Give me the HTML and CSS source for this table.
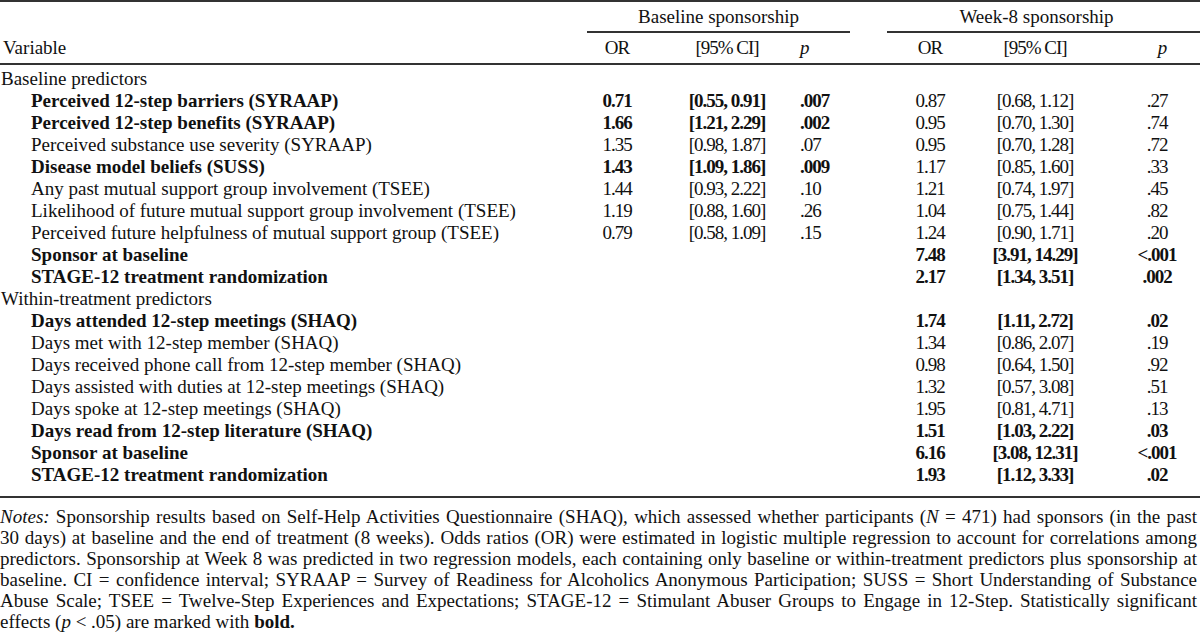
FILE: index.html
```html
<!DOCTYPE html>
<html lang="en">
<head>
<meta charset="utf-8">
<title>Predictors of sponsorship</title>
<link rel="stylesheet" href="styles.css">
</head>
<body>
<div class="page">
<table class="results">
  <colgroup>
    <col class="c-var"><col class="c-or1"><col class="c-ci1"><col class="c-p1"><col class="c-gap"><col class="c-or2"><col class="c-ci2"><col class="c-p2">
  </colgroup>
  <thead>
    <tr class="group-row">
      <th></th>
      <th colspan="3" class="group g1"><div class="group-label">Baseline sponsorship</div></th>
      <th></th>
      <th colspan="3" class="group g2"><div class="group-label">Week-8 sponsorship</div></th>
    </tr>
    <tr class="col-row">
      <th class="var">Variable</th>
      <th class="num ctr">OR</th>
      <th class="num ctr">[95% CI]</th>
      <th class="num left"><i>p</i></th>
      <th></th>
      <th class="num ctr">OR</th>
      <th class="num ctr">[95% CI]</th>
      <th class="num ctr pw ph"><i>p</i></th>
    </tr>
  </thead>
  <tbody>
    <tr class="section first"><td colspan="8">Baseline predictors</td></tr>
    <tr><td class="item b">Perceived 12-step barriers (SYRAAP)</td><td class="num ctr b">0.71</td><td class="num ctr b">[0.55, 0.91]</td><td class="num left b">.007</td><td></td><td class="num ctr">0.87</td><td class="num ctr">[0.68, 1.12]</td><td class="num ctr pw">.27</td></tr>
    <tr><td class="item b">Perceived 12-step benefits (SYRAAP)</td><td class="num ctr b">1.66</td><td class="num ctr b">[1.21, 2.29]</td><td class="num left b">.002</td><td></td><td class="num ctr">0.95</td><td class="num ctr">[0.70, 1.30]</td><td class="num ctr pw">.74</td></tr>
    <tr><td class="item">Perceived substance use severity (SYRAAP)</td><td class="num ctr">1.35</td><td class="num ctr">[0.98, 1.87]</td><td class="num left">.07</td><td></td><td class="num ctr">0.95</td><td class="num ctr">[0.70, 1.28]</td><td class="num ctr pw">.72</td></tr>
    <tr><td class="item b">Disease model beliefs (SUSS)</td><td class="num ctr b">1.43</td><td class="num ctr b">[1.09, 1.86]</td><td class="num left b">.009</td><td></td><td class="num ctr">1.17</td><td class="num ctr">[0.85, 1.60]</td><td class="num ctr pw">.33</td></tr>
    <tr><td class="item">Any past mutual support group involvement (TSEE)</td><td class="num ctr">1.44</td><td class="num ctr">[0.93, 2.22]</td><td class="num left">.10</td><td></td><td class="num ctr">1.21</td><td class="num ctr">[0.74, 1.97]</td><td class="num ctr pw">.45</td></tr>
    <tr><td class="item">Likelihood of future mutual support group involvement (TSEE)</td><td class="num ctr">1.19</td><td class="num ctr">[0.88, 1.60]</td><td class="num left">.26</td><td></td><td class="num ctr">1.04</td><td class="num ctr">[0.75, 1.44]</td><td class="num ctr pw">.82</td></tr>
    <tr><td class="item">Perceived future helpfulness of mutual support group (TSEE)</td><td class="num ctr">0.79</td><td class="num ctr">[0.58, 1.09]</td><td class="num left">.15</td><td></td><td class="num ctr">1.24</td><td class="num ctr">[0.90, 1.71]</td><td class="num ctr pw">.20</td></tr>
    <tr><td class="item b">Sponsor at baseline</td><td></td><td></td><td></td><td></td><td class="num ctr b">7.48</td><td class="num ctr b">[3.91, 14.29]</td><td class="num ctr pw b">&lt;.001</td></tr>
    <tr><td class="item b">STAGE-12 treatment randomization</td><td></td><td></td><td></td><td></td><td class="num ctr b">2.17</td><td class="num ctr b">[1.34, 3.51]</td><td class="num ctr pw b">.002</td></tr>
    <tr class="section"><td colspan="8">Within-treatment predictors</td></tr>
    <tr><td class="item b">Days attended 12-step meetings (SHAQ)</td><td></td><td></td><td></td><td></td><td class="num ctr b">1.74</td><td class="num ctr b">[1.11, 2.72]</td><td class="num ctr pw b">.02</td></tr>
    <tr><td class="item">Days met with 12-step member (SHAQ)</td><td></td><td></td><td></td><td></td><td class="num ctr">1.34</td><td class="num ctr">[0.86, 2.07]</td><td class="num ctr pw">.19</td></tr>
    <tr><td class="item">Days received phone call from 12-step member (SHAQ)</td><td></td><td></td><td></td><td></td><td class="num ctr">0.98</td><td class="num ctr">[0.64, 1.50]</td><td class="num ctr pw">.92</td></tr>
    <tr><td class="item">Days assisted with duties at 12-step meetings (SHAQ)</td><td></td><td></td><td></td><td></td><td class="num ctr">1.32</td><td class="num ctr">[0.57, 3.08]</td><td class="num ctr pw">.51</td></tr>
    <tr><td class="item">Days spoke at 12-step meetings (SHAQ)</td><td></td><td></td><td></td><td></td><td class="num ctr">1.95</td><td class="num ctr">[0.81, 4.71]</td><td class="num ctr pw">.13</td></tr>
    <tr><td class="item b">Days read from 12-step literature (SHAQ)</td><td></td><td></td><td></td><td></td><td class="num ctr b">1.51</td><td class="num ctr b">[1.03, 2.22]</td><td class="num ctr pw b">.03</td></tr>
    <tr><td class="item b">Sponsor at baseline</td><td></td><td></td><td></td><td></td><td class="num ctr b">6.16</td><td class="num ctr b">[3.08, 12.31]</td><td class="num ctr pw b">&lt;.001</td></tr>
    <tr class="last"><td class="item b">STAGE-12 treatment randomization</td><td></td><td></td><td></td><td></td><td class="num ctr b">1.93</td><td class="num ctr b">[1.12, 3.33]</td><td class="num ctr pw b">.02</td></tr>
  </tbody>
</table>
<div class="notes">
  <span class="ln"><i>Notes:</i> Sponsorship results based on Self-Help Activities Questionnaire (SHAQ), which assessed whether participants (<i>N</i> = 471) had sponsors (in the past</span>
  <span class="ln">30 days) at baseline and the end of treatment (8 weeks). Odds ratios (OR) were estimated in logistic multiple regression to account for correlations among</span>
  <span class="ln">predictors. Sponsorship at Week 8 was predicted in two regression models, each containing only baseline or within-treatment predictors plus sponsorship at</span>
  <span class="ln">baseline. CI = confidence interval; SYRAAP = Survey of Readiness for Alcoholics Anonymous Participation; SUSS = Short Understanding of Substance</span>
  <span class="ln">Abuse Scale; TSEE = Twelve-Step Experiences and Expectations; STAGE-12 = Stimulant Abuser Groups to Engage in 12-Step. Statistically significant</span>
  <span class="ln end">effects (<i>p</i> &lt; .05) are marked with <b>bold.</b></span>
</div>
</div>
</body>
</html>
```

FILE: styles.css
```css
html, body {
  margin: 0;
  padding: 0;
  background: #ffffff;
}

.page {
  width: 1200px;
  font-family: "Liberation Serif", "Times New Roman", serif;
  font-size: 19px;
  color: #111111;
}

.results {
  width: 1200px;
  table-layout: fixed;
  border-collapse: collapse;
  border-top: 2px solid #333333;
  border-bottom: 2px solid #333333;
}

.c-var { width: 580px; }
.c-or1 { width: 74px; }
.c-ci1 { width: 146px; }
.c-p1 { width: 60px; }
.c-gap { width: 27px; }
.c-or2 { width: 86px; }
.c-ci2 { width: 124px; }
.c-p2 { width: 103px; }

.results th,
.results td {
  padding: 0;
  line-height: 22px;
  font-weight: normal;
  white-space: nowrap;
  vertical-align: middle;
}

.results .group-row th {
  padding-top: 4px;
  height: 27px;
  vertical-align: top;
}

.group-label {
  border-bottom: 2px solid #333333;
  text-align: center;
  line-height: 22px;
  padding-bottom: 3px;
}

.g1 .group-label {
  margin: 0 10px 0 7px;
}

.g2 .group-label {
  padding-right: 14px;
}

.results .col-row th {
  padding-top: 4px;
  padding-bottom: 4px;
  border-bottom: 2px solid #333333;
}

.results .col-row .var {
  text-align: left;
  padding-left: 3px;
}

.results .num { letter-spacing: -1px; }
.results .ctr { text-align: center; }
.results .left { text-align: left; }
.results .pw { padding-left: 17px; }
.results .ph { padding-left: 27px; }
.results .b { font-weight: bold; }

.results .section td {
  padding-left: 1px;
}

.results .section.first td {
  padding-top: 3px;
}

.results .item {
  padding-left: 31px;
}

.results .last td {
  padding-bottom: 10px;
}

.notes {
  margin-top: 8px;
  line-height: 21px;
}

.ln {
  display: block;
  text-align: justify;
  text-align-last: justify;
  padding-right: 3px;
}

.ln.end {
  text-align-last: left;
}
```
